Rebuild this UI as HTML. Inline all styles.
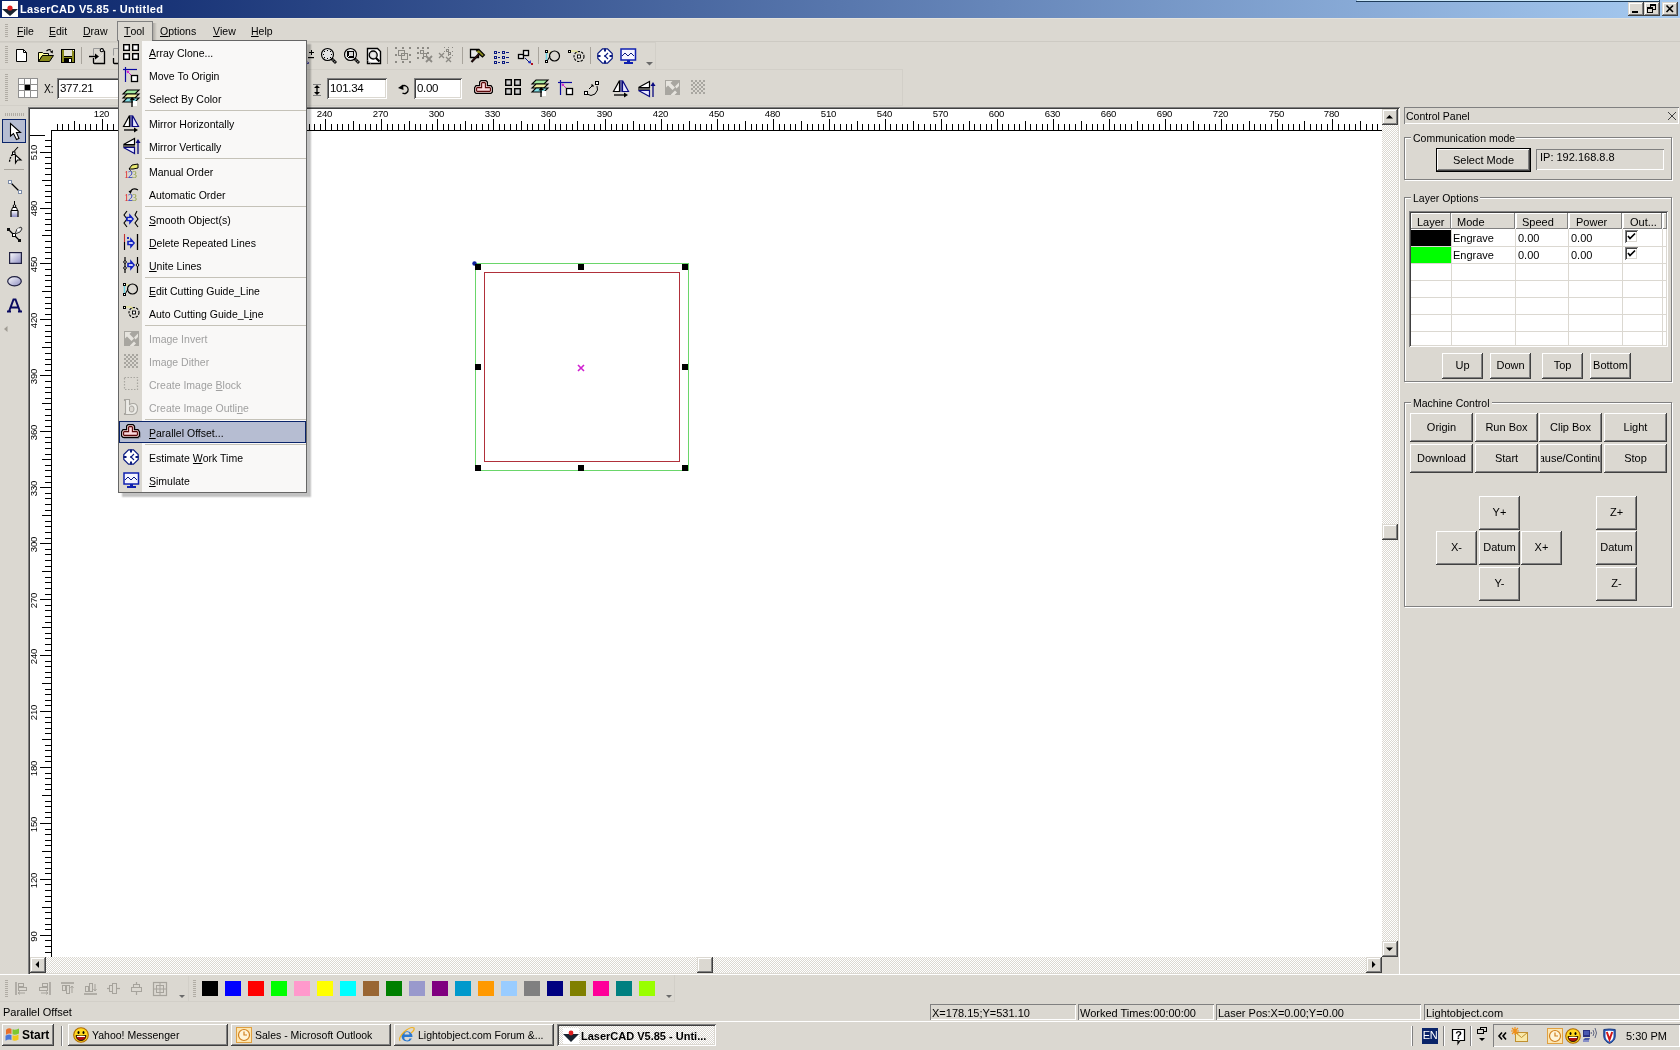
<!DOCTYPE html><html><head><meta charset="utf-8"><style>
*{margin:0;padding:0;box-sizing:border-box}
html,body{width:1680px;height:1050px;overflow:hidden;background:#dbd8d1;font-family:"Liberation Sans",sans-serif;font-size:11px;color:#000}
body>div,#root div{position:absolute}
#root{position:absolute;left:0;top:0;width:1680px;height:1050px;overflow:hidden;will-change:transform}
.t{white-space:nowrap;line-height:13px;height:13px}
svg{position:absolute;overflow:visible}
u{text-decoration:none;border-bottom:1px solid currentColor;display:inline-block;line-height:10px}
.rl{font-size:9.6px;line-height:9px;height:9px;text-align:center;letter-spacing:-0.2px}
.chk{background-image:repeating-conic-gradient(#fff 0 25%,#dbd8d1 0 50%);background-size:2px 2px}
</style></head><body><div id="root">

<div style="left:0px;top:0px;width:1680px;height:18px;background:linear-gradient(to right,#0a246a,#a6caf0);"></div>
<div style="left:1357px;top:0px;width:302px;height:1px;background:#c8e4f6;"></div>
<div style="left:1356px;top:1px;width:304px;height:1px;background:#1e3c5a;"></div>
<div style="left:1659px;top:0px;width:1px;height:1px;background:#1e3c5a;"></div>
<svg style="left:2px;top:1px" width="16" height="16" viewBox="0 0 16 16"><rect x="0" y="0" width="16" height="16" fill="#fff"/><path d="M0 8 L16 8 L8 15 Z" fill="#1a2430"/><circle cx="8" cy="7" r="2.6" fill="#e02020"/></svg>
<div class="t" style="left:20px;top:3px;color:#fff;font-weight:bold;font-size:11px;letter-spacing:0.3px;">LaserCAD V5.85 - Untitled</div>
<div style="left:1628px;top:2px;width:16px;height:14px;box-shadow:inset -1px -1px #404040,inset 1px 1px #dbd8d1,inset -2px -2px #808080,inset 2px 2px #fff;background:#dbd8d1;"><div style="left:4px;top:9px;width:6px;height:2px;background:#000"></div></div>
<div style="left:1644px;top:2px;width:16px;height:14px;box-shadow:inset -1px -1px #404040,inset 1px 1px #dbd8d1,inset -2px -2px #808080,inset 2px 2px #fff;background:#dbd8d1;"><div style="left:6px;top:2px;width:6px;height:6px;border:1px solid #000;border-top-width:2px"></div><div style="left:3px;top:5px;width:6px;height:6px;border:1px solid #000;border-top-width:2px;background:#dbd8d1"></div></div>
<div style="left:1662px;top:2px;width:16px;height:14px;box-shadow:inset -1px -1px #404040,inset 1px 1px #dbd8d1,inset -2px -2px #808080,inset 2px 2px #fff;background:#dbd8d1;"><svg style="left:0;top:0" width="16" height="14"><path d="M4.5 3.5 L11 10 M11 3.5 L4.5 10" stroke="#000" stroke-width="1.6"/></svg></div>
<div style="left:5px;top:24px;width:3px;height:14px;background:repeating-linear-gradient(#b0aca4 0 1px,transparent 1px 2px);"></div>
<div style="left:117px;top:21px;width:36px;height:21px;border:1px solid #808080;border-bottom:none;background:#dbd8d1;"></div>
<div class="t" style="left:17px;top:25px;transform:scaleX(.955);transform-origin:0 0;"><u>F</u>ile</div>
<div class="t" style="left:49px;top:25px;transform:scaleX(.955);transform-origin:0 0;"><u>E</u>dit</div>
<div class="t" style="left:83px;top:25px;transform:scaleX(.955);transform-origin:0 0;"><u>D</u>raw</div>
<div class="t" style="left:124px;top:25px;transform:scaleX(.955);transform-origin:0 0;"><u>T</u>ool</div>
<div class="t" style="left:160px;top:25px;transform:scaleX(.955);transform-origin:0 0;"><u>O</u>ptions</div>
<div class="t" style="left:213px;top:25px;transform:scaleX(.955);transform-origin:0 0;"><u>V</u>iew</div>
<div class="t" style="left:251px;top:25px;transform:scaleX(.955);transform-origin:0 0;"><u>H</u>elp</div>
<div style="left:0px;top:41px;width:1680px;height:1px;background:#cdcac3;"></div>
<div style="left:0px;top:18px;width:1680px;height:1px;background:#e4e2dc;"></div>
<div style="left:0px;top:42px;width:656px;height:28px;border:1px solid #d2cfc8;border-left:none;"></div>
<div style="left:0px;top:69px;width:903px;height:37px;border:1px solid #d2cfc8;border-left:none;"></div>
<div style="left:5px;top:46px;width:3px;height:18px;background:repeating-linear-gradient(#b0aca4 0 1px,transparent 1px 2px);"></div>
<div style="left:5px;top:74px;width:3px;height:28px;background:repeating-linear-gradient(#b0aca4 0 1px,transparent 1px 2px);"></div>
<svg style="left:16px;top:49px;" width="12" height="14" viewBox="0 0 12 14"><path d="M.5 .5H7.5L10.5 3.5V12.5H.5Z" fill="#fff" stroke="#000"/><path d="M7.5 .5V3.5H10.5" fill="none" stroke="#000"/></svg>
<svg style="left:38px;top:49px;" width="16" height="14" viewBox="0 0 16 14"><path d="M8.5 2.2Q10.5 -.2 13 1.2" fill="none" stroke="#000" stroke-width="1.2"/><path d="M11.8 2.8L15 1.2L14.6 4.6Z" fill="#000"/><path d="M.5 3.5H4.5L5.5 4.5H10.5V6.5H4.5L.5 12.5Z" fill="#ffff9c" stroke="#000"/><path d="M4.5 6.5H15.5L11.5 12.5H.5Z" fill="#8a8a1c" stroke="#000"/></svg>
<svg style="left:61px;top:49px;" width="15" height="15" viewBox="0 0 15 15"><rect x="0" y="0" width="14" height="14" fill="#000"/><rect x="1" y="1" width="12" height="12" fill="#8a8a1c"/><rect x="3" y="1" width="8" height="6" fill="#e4e2d8"/><rect x="3" y="7" width="8" height="1" fill="#000"/><rect x="3" y="9" width="8" height="5" fill="#000"/><rect x="8" y="10" width="2" height="3" fill="#fff"/><rect x="12" y="1" width="1" height="1" fill="#fff"/></svg>
<div style="left:81px;top:47px;width:1px;height:17px;background:#a8a49c;"></div>
<svg style="left:89px;top:48px;" width="17" height="16" viewBox="0 0 17 16"><path d="M4.5 7.5V.5H11.5" fill="none" stroke="#9a9a9a"/><path d="M4.5 10V14.5Q4.5 15.5 5.5 15.5H15.5V3.5L12.5 .5" fill="none" stroke="#000" stroke-width="1.3"/><circle cx="12.8" cy="2.2" r="1.6" fill="#fff" stroke="#000" stroke-width="1.1"/><path d="M0 8.5H8" stroke="#000" stroke-width="1.4"/><path d="M6 5.5L10 8.5L6 11.5Z" fill="#000"/><path d="M6 14L14 6" stroke="#e8e8e8"/></svg>
<svg style="left:109px;top:48px;" width="17" height="16" viewBox="0 0 17 16"><path d="M4.5 7.5V.5H11.5" fill="none" stroke="#9a9a9a"/><path d="M4.5 10V14.5Q4.5 15.5 5.5 15.5H15.5" fill="none" stroke="#000" stroke-width="1.3"/></svg>
<svg style="left:303px;top:49px;" width="12" height="16" viewBox="0 0 12 16"><rect x="6" y="3" width="5" height="1" fill="#000"/><rect x="8" y="1" width="1" height="5" fill="#000"/><rect x="5" y="8" width="6" height="1.2" fill="#000"/><path d="M1.5 10.5L6 15" stroke="#10108a" stroke-width="1.8" stroke-dasharray="1.3 .9"/></svg>
<svg style="left:321px;top:48px;" width="16" height="17" viewBox="0 0 16 17"><circle cx="6.5" cy="6.5" r="6" fill="#e4e4e4" stroke="#000" stroke-width="1.1"/><g fill="#000"><rect x="3" y="3" width="1" height="1"/><rect x="6" y="2" width="1" height="1"/><rect x="9" y="3" width="1" height="1"/><rect x="2" y="6" width="1" height="1"/><rect x="10" y="6" width="1" height="1"/><rect x="3" y="9" width="1" height="1"/><rect x="6" y="10" width="1" height="1"/><rect x="9" y="9" width="1" height="1"/></g><path d="M10.5 10.5L15 15" stroke="#000" stroke-width="2.8"/><rect x="11.5" y="11.5" width="1" height="1" fill="#fff"/><rect x="13.3" y="13.3" width="1" height="1" fill="#fff"/></svg>
<svg style="left:344px;top:48px;" width="16" height="17" viewBox="0 0 16 17"><circle cx="6.5" cy="6.5" r="6" fill="#e4e4e4" stroke="#000" stroke-width="1.1"/><rect x="3" y="3" width="7" height="7" fill="#000"/><rect x="5" y="4" width="4" height="4" fill="#d8d8d8"/><path d="M3 10L6 7" stroke="#fff"/><path d="M10.5 10.5L15 15" stroke="#000" stroke-width="2.8"/><rect x="11.5" y="11.5" width="1" height="1" fill="#fff"/><rect x="13.3" y="13.3" width="1" height="1" fill="#fff"/></svg>
<svg style="left:367px;top:48px;" width="14" height="17" viewBox="0 0 14 17"><path d="M.5 .5H10.5L13.5 3.5V15.5H.5Z" fill="#fff" stroke="#000" stroke-width="1.4"/><path d="M.5 12.5L4 15.5" stroke="#999"/><circle cx="6.2" cy="7" r="4" fill="#d8d8d8" stroke="#000" stroke-width="1.3"/><path d="M9 10L12.5 13.5" stroke="#000" stroke-width="2.2"/><circle cx="6.2" cy="7" r="2.2" fill="#eee"/></svg>
<div style="left:387px;top:47px;width:1px;height:17px;background:#a8a49c;"></div>
<svg style="left:394px;top:47px;" width="17" height="17" viewBox="0 0 17 17"><g fill="#8c8a84"><rect x="1" y="0" width="2" height="2"/><rect x="8" y="0" width="2" height="2"/><rect x="15" y="0" width="2" height="2"/><rect x="1" y="7" width="2" height="2"/><rect x="15" y="7" width="2" height="2"/><rect x="1" y="14" width="2" height="2"/><rect x="8" y="14" width="2" height="2"/><rect x="15" y="14" width="2" height="2"/></g><rect x="4.5" y="3.5" width="6" height="5" fill="none" stroke="#8c8a84"/><rect x="7.5" y="6.5" width="6" height="6" fill="none" stroke="#8c8a84"/></svg>
<svg style="left:417px;top:47px;" width="17" height="17" viewBox="0 0 17 17"><g fill="#8c8a84"><rect x="0" y="0" width="2" height="2"/><rect x="5" y="0" width="2" height="2"/><rect x="10" y="0" width="2" height="2"/><rect x="0" y="5" width="2" height="2"/><rect x="10" y="5" width="2" height="2"/><rect x="0" y="10" width="2" height="2"/><rect x="5" y="10" width="2" height="2"/></g><rect x="3.5" y="3.5" width="3" height="3" fill="none" stroke="#8c8a84"/><rect x="6.5" y="6.5" width="3" height="3" fill="none" stroke="#8c8a84"/><path d="M9 9L15 15M15 9L9 15" stroke="#8c8a84" stroke-width="1.8"/></svg>
<svg style="left:439px;top:47px;" width="17" height="17" viewBox="0 0 17 17"><g fill="#8c8a84"><rect x="5" y="0" width="1" height="1"/><rect x="9" y="0" width="1" height="1"/><rect x="13" y="0" width="1" height="1"/><rect x="5" y="4" width="1" height="1"/><rect x="13" y="4" width="1" height="1"/><rect x="9" y="8" width="1" height="1"/><rect x="13" y="8" width="1" height="1"/></g><rect x="7.5" y="2.5" width="2" height="2" fill="none" stroke="#8c8a84"/><rect x="9.5" y="5.5" width="2" height="2" fill="none" stroke="#8c8a84"/><path d="M0 6L5 11M5 6L0 11M7 10L12 15M12 10L7 15" stroke="#8c8a84" stroke-width="1.3"/></svg>
<div style="left:462px;top:47px;width:1px;height:17px;background:#a8a49c;"></div>
<svg style="left:470px;top:49px;" width="16" height="15" viewBox="0 0 16 15"><path d="M.5 .5H8.5V8.5H.5Z" fill="#e8e8e8" stroke="#000" stroke-width="1.3"/><path d="M6 2L9 .5L14.5 6L12.5 8L9 5" fill="#8a8a1c" stroke="#000" stroke-width="1.1"/><path d="M9.5 4.5L1.5 13" stroke="#000" stroke-width="2.2"/><path d="M9 5L2 12.5" stroke="#6a2020" stroke-width=".7"/></svg>
<svg style="left:494px;top:49px;" width="16" height="14" viewBox="0 0 16 14"><rect x=".5" y="2.5" width="2" height="2" fill="none" stroke="#0a1a80"/><path d="M4 3.5H6" stroke="#0a1a80"/><rect x="8.5" y="2.5" width="2" height="2" fill="none" stroke="#0a1a80"/><path d="M12 3.5H15" stroke="#0a1a80"/><rect x=".5" y="7.5" width="2" height="2" fill="none" stroke="#0a1a80"/><path d="M4 8.5H6" stroke="#0a1a80"/><rect x="8.5" y="7.5" width="2" height="2" fill="none" stroke="#0a1a80"/><path d="M12 8.5H15" stroke="#0a1a80"/><rect x=".5" y="12.5" width="2" height="2" fill="none" stroke="#0a1a80"/><path d="M4 13.5H6" stroke="#0a1a80"/><rect x="8.5" y="12.5" width="2" height="2" fill="none" stroke="#0a1a80"/><path d="M12 13.5H15" stroke="#0a1a80"/></svg>
<svg style="left:517px;top:49px;" width="17" height="16" viewBox="0 0 17 16"><rect x="1.5" y="5.5" width="5" height="4" fill="#eee" stroke="#000" stroke-width="1.3"/><rect x="6.5" y="1.5" width="5" height="5" fill="#eee" stroke="#000" stroke-width="1.3"/><path d="M8 9L13 14" stroke="#0a1a80"/><path d="M11 14L14 14.5L13.5 11Z" fill="#1020c0"/><rect x="14" y="14" width="2" height="2" fill="#b01020"/></svg>
<div style="left:538px;top:47px;width:1px;height:17px;background:#a8a49c;"></div>
<svg style="left:545px;top:50px;" width="17" height="15" viewBox="0 0 17 15"><path d="M1.5 3V12" stroke="#6cd4e4" stroke-width="1.5"/><path d="M3 2H6" stroke="#e8e880"/><rect x=".5" y=".5" width="2" height="2" fill="#fff" stroke="#000"/><rect x=".5" y="10.5" width="2" height="2" fill="#fff" stroke="#000"/><path d="M2.5 10.5L5 6" stroke="#000"/><circle cx="9.5" cy="6" r="5" fill="none" stroke="#000" stroke-width="1.2"/></svg>
<svg style="left:568px;top:50px;" width="17" height="15" viewBox="0 0 17 15"><rect x=".5" y=".5" width="2" height="2" fill="#fff" stroke="#000"/><path d="M3 1H8L10 3" stroke="#e8e880" fill="none" stroke-width="1.2"/><circle cx="11" cy="6.5" r="5" fill="none" stroke="#000" stroke-width="1.1" stroke-dasharray="2.4 1.2"/><rect x="9.5" y="5" width="3" height="3" fill="#fff" stroke="#000" stroke-width=".9"/></svg>
<div style="left:590px;top:47px;width:1px;height:17px;background:#a8a49c;"></div>
<svg style="left:597px;top:48px;" width="17" height="17" viewBox="0 0 17 17"><path d="M5.5 .8H10.5L15.2 5.5V10.5L10.5 15.2H5.5L.8 10.5V5.5Z" fill="#fff" stroke="#0a1a80" stroke-width="1.2"/><path d="M8 .5V3.5M8 12.5V15.5M.5 8H3.5M12.5 8H15.5" stroke="#0a1a80" stroke-width="2"/><path d="M11 5L8 8L11 11" fill="none" stroke="#0a1a80" stroke-width="1.1"/><rect x="7.2" y="7.2" width="1.6" height="1.6" fill="#0a1a80"/></svg>
<svg style="left:620px;top:48px;" width="17" height="17" viewBox="0 0 17 17"><rect x="1" y="1" width="14.5" height="11" fill="#f4f4ff" stroke="#1020b0" stroke-width="1.5"/><path d="M2 8L5 5L8 8L11 5L14 8" fill="none" stroke="#0a1a80" stroke-width="1" stroke-linejoin="miter"/><rect x="7" y="12" width="3" height="2" fill="#1020b0"/><rect x="4" y="14" width="9" height="2" fill="#1020b0"/></svg>
<svg style="left:646px;top:62px" width="7" height="4"><path d="M0 0H7L3.5 3.5Z" fill="#6a6a6a"/></svg>
<svg style="left:18px;top:78px;" width="20" height="20" viewBox="0 0 20 20"><rect x=".5" y=".5" width="19" height="19" fill="#fff" stroke="#909090"/><path d="M6.5 0V20M12.5 0V20M0 6.5H20M0 12.5H20" stroke="#909090"/><rect x="7" y="7" width="5" height="5" fill="#000"/></svg>
<div class="t" style="left:44px;top:83px;font-size:12px;transform:scaleX(.85);transform-origin:0 0;">X:</div>
<div style="left:57px;top:78px;width:70px;height:21px;box-shadow:inset 1px 1px #808080,inset -1px -1px #fff,inset 2px 2px #404040,inset -2px -2px #dbd8d1;background:#fff;"></div>
<div class="t" style="left:60px;top:82px;font-size:11.5px;letter-spacing:-.3px;">377.21</div>
<svg style="left:313px;top:84px;" width="8" height="12" viewBox="0 0 8 12"><path d="M0 .5H8M0 11.5H8" stroke="#808080"/><path d="M4 2V10" stroke="#000" stroke-width="1.3"/><path d="M1 4L4 1L7 4ZM1 8L4 11L7 8Z" fill="#000"/></svg>
<div style="left:327px;top:78px;width:60px;height:21px;box-shadow:inset 1px 1px #808080,inset -1px -1px #fff,inset 2px 2px #404040,inset -2px -2px #dbd8d1;background:#fff;"></div>
<div class="t" style="left:330px;top:82px;font-size:11.5px;letter-spacing:-.3px;">101.34</div>
<svg style="left:398px;top:84px;" width="12" height="10" viewBox="0 0 12 10"><path d="M4 2.2A4 4 0 1 1 4.5 9.2" fill="none" stroke="#000" stroke-width="1.3"/><path d="M0 4L5 .5L5.5 6Z" fill="#000"/></svg>
<div style="left:414px;top:78px;width:48px;height:21px;box-shadow:inset 1px 1px #808080,inset -1px -1px #fff,inset 2px 2px #404040,inset -2px -2px #dbd8d1;background:#fff;"></div>
<div class="t" style="left:417px;top:82px;font-size:11.5px;letter-spacing:-.3px;">0.00</div>
<svg style="left:474px;top:80px;" width="20" height="15" viewBox="0 0 20 15"><path d="M7 .6H12L13.4 2V5.6H17L18.4 7.6V12L17 13.4H2L.6 12V7.6L2 5.6H5.6V2Z" fill="#f8d4d4" stroke="#000" stroke-width="1.2"/><path d="M8.2 2.6H10.8L11.4 3.2V7.6H15.8L16.4 8.2V10.8L15.8 11.4H3.2L2.6 10.8V8.2L3.2 7.6H7.6V3.2Z" fill="#fcd8dc" stroke="#5a0808" stroke-width="1.1"/></svg>
<svg style="left:505px;top:79px;" width="16" height="16" viewBox="0 0 16 16"><g fill="#d0d0d0" stroke="#000" stroke-width="1.4"><rect x=".7" y=".7" width="5.6" height="5.6"/><rect x="9.7" y=".7" width="5.6" height="5.6"/><rect x=".7" y="9.7" width="5.6" height="5.6"/><rect x="9.7" y="9.7" width="5.6" height="5.6"/></g></svg>
<svg style="left:532px;top:79px;" width="17" height="18" viewBox="0 0 17 18"><path d="M4 1H16L12 5H0Z" fill="#a0e8a0" stroke="#000" stroke-width="1.1"/><path d="M4 5H16L12 9H0Z" fill="#f0f0a0" stroke="#000" stroke-width="1.1"/><path d="M4 9H16L12 13H0Z" fill="#80e0e8" stroke="#000" stroke-width="1.1"/><path d="M9 9V18" stroke="#000" stroke-width="1.3"/><path d="M6.5 11.5L9 8L12 11" fill="#000"/><rect x="10" y="12" width="4" height="5" fill="#fff"/></svg>
<svg style="left:558px;top:80px;" width="16" height="16" viewBox="0 0 16 16"><path d="M0 2.5H14" stroke="#0a0aa0" stroke-width="1.2"/><path d="M2.5 0V15" stroke="#0a0aa0" stroke-width="1.2"/><path d="M4 4L8 8" stroke="#d020d0"/><path d="M3.5 3.5L6.5 4L4 6.5Z" fill="#d020d0"/><rect x="8.5" y="8.5" width="6" height="6" fill="#fff" stroke="#000" stroke-width="1.3"/></svg>
<svg style="left:584px;top:81px;" width="16" height="16" viewBox="0 0 16 16"><rect x=".5" y="10.5" width="3" height="3" fill="#fff" stroke="#000"/><rect x="11.5" y=".5" width="3" height="3" fill="#fff" stroke="#000"/><path d="M3 13Q7 16 11 13Q15 9 13 5" fill="none" stroke="#000"/><path d="M5 8L9 4M7 4H9V6" fill="none" stroke="#000"/></svg>
<svg style="left:613px;top:80px;" width="16" height="17" viewBox="0 0 16 17"><path d="M6.5 .5V11.5H.5Z" fill="#fff" stroke="#000" stroke-width="1.2"/><path d="M9.5 .5V11.5H15.5Z" fill="#e8e8ff" stroke="#0a0a80" stroke-width="1.2"/><path d="M8 0V12" stroke="#0a0a80" stroke-width="1.2"/><path d="M1 15H13" stroke="#000" stroke-width="1.3"/><path d="M11 12.5L15 15L11 17.5Z" fill="#000"/></svg>
<svg style="left:638px;top:81px;" width="17" height="16" viewBox="0 0 17 16"><path d="M.5 6.5H11.5L11.5 .5Z" fill="#fff" stroke="#000" stroke-width="1.2"/><path d="M.5 9.5H11.5V15.5Z" fill="#e8e8ff" stroke="#0a0a80" stroke-width="1.2"/><path d="M0 8H12" stroke="#000" stroke-width="1.2"/><path d="M15 16V3" stroke="#0a0a80" stroke-width="1.3"/><path d="M12.5 5L15 1L17.5 5Z" fill="#0a0a80"/></svg>
<svg style="left:665px;top:80px;" width="15" height="15" viewBox="0 0 15 15"><rect x="0" y="0" width="15" height="15" fill="#a8a6a0"/><path d="M1 1H7.5L5.5 3L10 7.5L7.5 10L3 5.5L1 7.5Z" fill="#e6e4de"/><path d="M10 6.5L14 2.5V6L11.5 8.5Z" fill="#e6e4de"/><path d="M6 14.5L10 10.5L12 12.5L9.5 15H6Z" fill="#e6e4de"/></svg>
<svg style="left:691px;top:80px;" width="14" height="14" viewBox="0 0 14 14"><path d="M0 0h2v2h-2zM4 0h2v2h-2zM8 0h2v2h-2zM12 0h2v2h-2zM2 2h2v2h-2zM6 2h2v2h-2zM10 2h2v2h-2zM0 4h2v2h-2zM4 4h2v2h-2zM8 4h2v2h-2zM12 4h2v2h-2zM2 6h2v2h-2zM6 6h2v2h-2zM10 6h2v2h-2zM0 8h2v2h-2zM4 8h2v2h-2zM8 8h2v2h-2zM12 8h2v2h-2zM2 10h2v2h-2zM6 10h2v2h-2zM10 10h2v2h-2zM0 12h2v2h-2zM4 12h2v2h-2zM8 12h2v2h-2zM12 12h2v2h-2z" fill="#a8a6a0"/></svg>
<div style="left:28px;top:107px;width:1372px;height:868px;background:#fff;box-shadow:inset 1px 1px #808080,inset -1px -1px #fff,inset 2px 2px #404040,inset -2px -2px #dbd8d1;"></div>
<svg style="left:0;top:0" width="1680" height="1050"><path d="M57.5 124V130M62.5 124V130M68.5 124V130M74.5 121V130M79.5 124V130M85.5 124V130M90.5 124V130M96.5 124V130M102.5 119V130M107.5 124V130M113.5 124V130M118.5 124V130M124.5 124V130M130.5 121V130M135.5 124V130M141.5 124V130M146.5 124V130M152.5 124V130M158.5 119V130M163.5 124V130M169.5 124V130M174.5 124V130M180.5 124V130M185.5 121V130M191.5 124V130M197.5 124V130M202.5 124V130M208.5 124V130M213.5 119V130M219.5 124V130M225.5 124V130M230.5 124V130M236.5 124V130M241.5 121V130M247.5 124V130M253.5 124V130M258.5 124V130M264.5 124V130M269.5 119V130M275.5 124V130M281.5 124V130M286.5 124V130M292.5 124V130M297.5 121V130M303.5 124V130M309.5 124V130M314.5 124V130M320.5 124V130M325.5 119V130M331.5 124V130M337.5 124V130M342.5 124V130M348.5 124V130M353.5 121V130M359.5 124V130M365.5 124V130M370.5 124V130M376.5 124V130M381.5 119V130M387.5 124V130M392.5 124V130M398.5 124V130M404.5 124V130M409.5 121V130M415.5 124V130M420.5 124V130M426.5 124V130M432.5 124V130M437.5 119V130M443.5 124V130M448.5 124V130M454.5 124V130M460.5 124V130M465.5 121V130M471.5 124V130M476.5 124V130M482.5 124V130M488.5 124V130M493.5 119V130M499.5 124V130M504.5 124V130M510.5 124V130M516.5 124V130M521.5 121V130M527.5 124V130M532.5 124V130M538.5 124V130M544.5 124V130M549.5 119V130M555.5 124V130M560.5 124V130M566.5 124V130M572.5 124V130M577.5 121V130M583.5 124V130M588.5 124V130M594.5 124V130M600.5 124V130M605.5 119V130M611.5 124V130M616.5 124V130M622.5 124V130M627.5 124V130M633.5 121V130M639.5 124V130M644.5 124V130M650.5 124V130M655.5 124V130M661.5 119V130M667.5 124V130M672.5 124V130M678.5 124V130M683.5 124V130M689.5 121V130M695.5 124V130M700.5 124V130M706.5 124V130M711.5 124V130M717.5 119V130M723.5 124V130M728.5 124V130M734.5 124V130M739.5 124V130M745.5 121V130M751.5 124V130M756.5 124V130M762.5 124V130M767.5 124V130M773.5 119V130M779.5 124V130M784.5 124V130M790.5 124V130M795.5 124V130M801.5 121V130M807.5 124V130M812.5 124V130M818.5 124V130M823.5 124V130M829.5 119V130M834.5 124V130M840.5 124V130M846.5 124V130M851.5 124V130M857.5 121V130M862.5 124V130M868.5 124V130M874.5 124V130M879.5 124V130M885.5 119V130M890.5 124V130M896.5 124V130M902.5 124V130M907.5 124V130M913.5 121V130M918.5 124V130M924.5 124V130M930.5 124V130M935.5 124V130M941.5 119V130M946.5 124V130M952.5 124V130M958.5 124V130M963.5 124V130M969.5 121V130M974.5 124V130M980.5 124V130M986.5 124V130M991.5 124V130M997.5 119V130M1002.5 124V130M1008.5 124V130M1014.5 124V130M1019.5 124V130M1025.5 121V130M1030.5 124V130M1036.5 124V130M1042.5 124V130M1047.5 124V130M1053.5 119V130M1058.5 124V130M1064.5 124V130M1069.5 124V130M1075.5 124V130M1081.5 121V130M1086.5 124V130M1092.5 124V130M1097.5 124V130M1103.5 124V130M1109.5 119V130M1114.5 124V130M1120.5 124V130M1125.5 124V130M1131.5 124V130M1137.5 121V130M1142.5 124V130M1148.5 124V130M1153.5 124V130M1159.5 124V130M1165.5 119V130M1170.5 124V130M1176.5 124V130M1181.5 124V130M1187.5 124V130M1193.5 121V130M1198.5 124V130M1204.5 124V130M1209.5 124V130M1215.5 124V130M1221.5 119V130M1226.5 124V130M1232.5 124V130M1237.5 124V130M1243.5 124V130M1249.5 121V130M1254.5 124V130M1260.5 124V130M1265.5 124V130M1271.5 124V130M1277.5 119V130M1282.5 124V130M1288.5 124V130M1293.5 124V130M1299.5 124V130M1304.5 121V130M1310.5 124V130M1316.5 124V130M1321.5 124V130M1327.5 124V130M1332.5 119V130M1338.5 124V130M1344.5 124V130M1349.5 124V130M1355.5 124V130M1360.5 121V130M1366.5 124V130M1372.5 124V130M1377.5 124V130M51 130.5H1382" stroke="#000" stroke-width="1" fill="none"/></svg>
<div class="rl" style="left:86.5px;top:109px;width:30px;">120</div>
<div class="rl" style="left:142.5px;top:109px;width:30px;">150</div>
<div class="rl" style="left:197.5px;top:109px;width:30px;">180</div>
<div class="rl" style="left:253.5px;top:109px;width:30px;">210</div>
<div class="rl" style="left:309.5px;top:109px;width:30px;">240</div>
<div class="rl" style="left:365.5px;top:109px;width:30px;">270</div>
<div class="rl" style="left:421.5px;top:109px;width:30px;">300</div>
<div class="rl" style="left:477.5px;top:109px;width:30px;">330</div>
<div class="rl" style="left:533.5px;top:109px;width:30px;">360</div>
<div class="rl" style="left:589.5px;top:109px;width:30px;">390</div>
<div class="rl" style="left:645.5px;top:109px;width:30px;">420</div>
<div class="rl" style="left:701.5px;top:109px;width:30px;">450</div>
<div class="rl" style="left:757.5px;top:109px;width:30px;">480</div>
<div class="rl" style="left:813.5px;top:109px;width:30px;">510</div>
<div class="rl" style="left:869.5px;top:109px;width:30px;">540</div>
<div class="rl" style="left:925.5px;top:109px;width:30px;">570</div>
<div class="rl" style="left:981.5px;top:109px;width:30px;">600</div>
<div class="rl" style="left:1037.5px;top:109px;width:30px;">630</div>
<div class="rl" style="left:1093.5px;top:109px;width:30px;">660</div>
<div class="rl" style="left:1149.5px;top:109px;width:30px;">690</div>
<div class="rl" style="left:1205.5px;top:109px;width:30px;">720</div>
<div class="rl" style="left:1261.5px;top:109px;width:30px;">750</div>
<div class="rl" style="left:1316.5px;top:109px;width:30px;">780</div>
<svg style="left:0;top:0" width="1680" height="1050"><path d="M45 140.5H51M45 146.5H51M40 152.5H51M45 157.5H51M45 163.5H51M45 168.5H51M45 174.5H51M42 180.5H51M45 185.5H51M45 191.5H51M45 196.5H51M45 202.5H51M40 208.5H51M45 213.5H51M45 219.5H51M45 224.5H51M45 230.5H51M42 235.5H51M45 241.5H51M45 247.5H51M45 252.5H51M45 258.5H51M40 263.5H51M45 269.5H51M45 275.5H51M45 280.5H51M45 286.5H51M42 291.5H51M45 297.5H51M45 303.5H51M45 308.5H51M45 314.5H51M40 319.5H51M45 325.5H51M45 331.5H51M45 336.5H51M45 342.5H51M42 347.5H51M45 353.5H51M45 359.5H51M45 364.5H51M45 370.5H51M40 375.5H51M45 381.5H51M45 387.5H51M45 392.5H51M45 398.5H51M42 403.5H51M45 409.5H51M45 415.5H51M45 420.5H51M45 426.5H51M40 431.5H51M45 437.5H51M45 442.5H51M45 448.5H51M45 454.5H51M42 459.5H51M45 465.5H51M45 470.5H51M45 476.5H51M45 482.5H51M40 487.5H51M45 493.5H51M45 498.5H51M45 504.5H51M45 510.5H51M42 515.5H51M45 521.5H51M45 526.5H51M45 532.5H51M45 538.5H51M40 543.5H51M45 549.5H51M45 554.5H51M45 560.5H51M45 566.5H51M42 571.5H51M45 577.5H51M45 582.5H51M45 588.5H51M45 594.5H51M40 599.5H51M45 605.5H51M45 610.5H51M45 616.5H51M45 622.5H51M42 627.5H51M45 633.5H51M45 638.5H51M45 644.5H51M45 650.5H51M40 655.5H51M45 661.5H51M45 666.5H51M45 672.5H51M45 677.5H51M42 683.5H51M45 689.5H51M45 694.5H51M45 700.5H51M45 705.5H51M40 711.5H51M45 717.5H51M45 722.5H51M45 728.5H51M45 733.5H51M42 739.5H51M45 745.5H51M45 750.5H51M45 756.5H51M45 761.5H51M40 767.5H51M45 773.5H51M45 778.5H51M45 784.5H51M45 789.5H51M42 795.5H51M45 801.5H51M45 806.5H51M45 812.5H51M45 817.5H51M40 823.5H51M45 829.5H51M45 834.5H51M45 840.5H51M45 845.5H51M42 851.5H51M45 857.5H51M45 862.5H51M45 868.5H51M45 873.5H51M40 879.5H51M45 884.5H51M45 890.5H51M45 896.5H51M45 901.5H51M42 907.5H51M45 912.5H51M45 918.5H51M45 924.5H51M45 929.5H51M40 935.5H51M45 940.5H51M45 946.5H51M45 952.5H51M51.5 130V957M30 135.5H45" stroke="#000" stroke-width="1" fill="none"/></svg>
<div class="rl" style="left:19.5px;top:148.2px;width:30px;transform:rotate(-90deg);transform-origin:15px 4.5px;left:18.3px;">510</div>
<div class="rl" style="left:19.5px;top:204.2px;width:30px;transform:rotate(-90deg);transform-origin:15px 4.5px;left:18.3px;">480</div>
<div class="rl" style="left:19.5px;top:260.2px;width:30px;transform:rotate(-90deg);transform-origin:15px 4.5px;left:18.3px;">450</div>
<div class="rl" style="left:19.5px;top:316.1px;width:30px;transform:rotate(-90deg);transform-origin:15px 4.5px;left:18.3px;">420</div>
<div class="rl" style="left:19.5px;top:372.1px;width:30px;transform:rotate(-90deg);transform-origin:15px 4.5px;left:18.3px;">390</div>
<div class="rl" style="left:19.5px;top:428.0px;width:30px;transform:rotate(-90deg);transform-origin:15px 4.5px;left:18.3px;">360</div>
<div class="rl" style="left:19.5px;top:483.9px;width:30px;transform:rotate(-90deg);transform-origin:15px 4.5px;left:18.3px;">330</div>
<div class="rl" style="left:19.5px;top:539.9px;width:30px;transform:rotate(-90deg);transform-origin:15px 4.5px;left:18.3px;">300</div>
<div class="rl" style="left:19.5px;top:595.9px;width:30px;transform:rotate(-90deg);transform-origin:15px 4.5px;left:18.3px;">270</div>
<div class="rl" style="left:19.5px;top:651.8px;width:30px;transform:rotate(-90deg);transform-origin:15px 4.5px;left:18.3px;">240</div>
<div class="rl" style="left:19.5px;top:707.8px;width:30px;transform:rotate(-90deg);transform-origin:15px 4.5px;left:18.3px;">210</div>
<div class="rl" style="left:19.5px;top:763.7px;width:30px;transform:rotate(-90deg);transform-origin:15px 4.5px;left:18.3px;">180</div>
<div class="rl" style="left:19.5px;top:819.7px;width:30px;transform:rotate(-90deg);transform-origin:15px 4.5px;left:18.3px;">150</div>
<div class="rl" style="left:19.5px;top:875.6px;width:30px;transform:rotate(-90deg);transform-origin:15px 4.5px;left:18.3px;">120</div>
<div class="rl" style="left:19.5px;top:931.5px;width:30px;transform:rotate(-90deg);transform-origin:15px 4.5px;left:18.3px;">90</div>
<div style="left:1382px;top:109px;width:16px;height:848px;"><div class="chk" style="left:0;top:0;width:16px;height:848px"></div></div>
<div style="left:1382px;top:109px;width:16px;height:16px;box-shadow:inset -1px -1px #404040,inset 1px 1px #dbd8d1,inset -2px -2px #808080,inset 2px 2px #fff;background:#dbd8d1;"><svg style="left:0;top:0" width="16" height="16"><path d="M4 9.5H11L7.5 6Z" fill="#000"/></svg></div>
<div style="left:1382px;top:941px;width:16px;height:16px;box-shadow:inset -1px -1px #404040,inset 1px 1px #dbd8d1,inset -2px -2px #808080,inset 2px 2px #fff;background:#dbd8d1;"><svg style="left:0;top:0" width="16" height="16"><path d="M4 6.5H11L7.5 10Z" fill="#000"/></svg></div>
<div style="left:1382px;top:524px;width:16px;height:16px;box-shadow:inset -1px -1px #404040,inset 1px 1px #dbd8d1,inset -2px -2px #808080,inset 2px 2px #fff;background:#dbd8d1;"></div>
<div style="left:30px;top:957px;width:1352px;height:16px;"><div class="chk" style="left:0;top:0;width:1352px;height:16px"></div></div>
<div style="left:30px;top:957px;width:16px;height:16px;box-shadow:inset -1px -1px #404040,inset 1px 1px #dbd8d1,inset -2px -2px #808080,inset 2px 2px #fff;background:#dbd8d1;"><svg style="left:0;top:0" width="16" height="16"><path d="M9 4L5.5 7.5L9 11Z" fill="#000"/></svg></div>
<div style="left:1366px;top:957px;width:16px;height:16px;box-shadow:inset -1px -1px #404040,inset 1px 1px #dbd8d1,inset -2px -2px #808080,inset 2px 2px #fff;background:#dbd8d1;"><svg style="left:0;top:0" width="16" height="16"><path d="M6 4L9.5 7.5L6 11Z" fill="#000"/></svg></div>
<div style="left:697px;top:957px;width:16px;height:16px;box-shadow:inset -1px -1px #404040,inset 1px 1px #dbd8d1,inset -2px -2px #808080,inset 2px 2px #fff;background:#dbd8d1;"></div>
<div style="left:1382px;top:957px;width:16px;height:16px;background:#dbd8d1;"></div>
<svg style="left:0;top:0" width="1680" height="1050"><rect x="475.5" y="263.5" width="213" height="207" fill="none" stroke="#6ad66a" stroke-width="1"/><rect x="484.5" y="272.5" width="195" height="189" fill="none" stroke="#b0303a" stroke-width="1"/><path d="M578 365L584 371M584 365L578 371" stroke="#d020d0" stroke-width="1.6"/><circle cx="474.5" cy="263.5" r="2.2" fill="#1020a0"/></svg>
<div style="left:475px;top:264px;width:6px;height:6px;background:#000;"></div>
<div style="left:475px;top:364px;width:6px;height:6px;background:#000;"></div>
<div style="left:475px;top:465px;width:6px;height:6px;background:#000;"></div>
<div style="left:578px;top:264px;width:6px;height:6px;background:#000;"></div>
<div style="left:578px;top:465px;width:6px;height:6px;background:#000;"></div>
<div style="left:682px;top:264px;width:6px;height:6px;background:#000;"></div>
<div style="left:682px;top:364px;width:6px;height:6px;background:#000;"></div>
<div style="left:682px;top:465px;width:6px;height:6px;background:#000;"></div>
<div style="left:5px;top:113px;width:19px;height:3px;background:repeating-linear-gradient(to right,#b0aca4 0 1px,transparent 1px 2px);"></div>
<div style="left:2px;top:119px;width:24px;height:24px;background:#b6bdd2;border:1px solid #0a246a;"></div>
<svg style="left:9px;top:123px;" width="12" height="18" viewBox="0 0 12 18"><path d="M1.5 .5V13L4.5 10.5L7.5 16.5L10 15.5L7.5 9.5H11.5Z" fill="#fff" stroke="#000" stroke-width="1.1" stroke-linejoin="miter"/></svg>
<svg style="left:8px;top:147px;" width="14" height="17" viewBox="0 0 14 17"><path d="M10 0L5.5 5" stroke="#000" stroke-width="1.1"/><rect x="4.5" y="5" width="2.5" height="2.5" fill="#fff" stroke="#000"/><path d="M4.5 7.5Q2 10 1.5 15" fill="none" stroke="#000" stroke-width="1.3" stroke-dasharray="2 1"/><path d="M7.5 8V16L9.5 13L13 13Z" fill="#fff" stroke="#000" stroke-width="1.1"/></svg>
<div style="left:4px;top:169px;width:20px;height:1px;background:#a8a49c;"></div>
<svg style="left:8px;top:180px;" width="14" height="14" viewBox="0 0 14 14"><path d="M2 2L12 12" stroke="#000" stroke-width="1.2"/><rect x=".5" y=".5" width="3" height="3" fill="#fff" stroke="#7c8ca8"/><rect x="10.5" y="10.5" width="3" height="3" fill="#fff" stroke="#7c8ca8"/></svg>
<svg style="left:10px;top:201px;" width="9" height="17" viewBox="0 0 9 17"><path d="M4.5 0V4" stroke="#000"/><circle cx="4.5" cy="5" r="1.3" fill="#fff" stroke="#000"/><path d="M2.5 6.5H6.5L7.5 9.5H1.5Z" fill="#fff" stroke="#000"/><defs><linearGradient id="pg" x1="0" y1="0" x2="0" y2="1"><stop offset="0" stop-color="#fff"/><stop offset="1" stop-color="#8e8ec4"/></linearGradient></defs><path d="M1 9.5H8V16H1Z" fill="url(#pg)"/><path d="M1 9.5V16M8 9.5V16M1 9.5H8" stroke="#000" stroke-width="1.2"/></svg>
<svg style="left:7px;top:226px;" width="16" height="16" viewBox="0 0 16 16"><path d="M2 4L7 9L12 14" stroke="#000" stroke-width="1.2"/><rect x="0" y="2" width="3" height="3" fill="#111"/><rect x="11" y="13" width="3" height="3" fill="#111"/><rect x="5.5" y="7.5" width="3" height="3" fill="#fff" stroke="#000"/><path d="M8 8L10 3L14 1L15 3L13 6Z" fill="#ddd" stroke="#333"/><circle cx="11.5" cy="3.5" r="1.3" fill="#fff"/></svg>
<svg style="left:9px;top:252px;" width="13" height="12" viewBox="0 0 13 12"><defs><linearGradient id="rg" x1="0" y1="0" x2="1" y2="1"><stop offset="0" stop-color="#fff"/><stop offset="1" stop-color="#8c8cc0"/></linearGradient></defs><rect x=".6" y=".6" width="11.8" height="10.8" fill="url(#rg)" stroke="#202040" stroke-width="1.2"/></svg>
<svg style="left:7px;top:276px;" width="15" height="11" viewBox="0 0 15 11"><defs><linearGradient id="eg" x1="0" y1="0" x2="1" y2="1"><stop offset="0" stop-color="#fff"/><stop offset="1" stop-color="#8c8cc0"/></linearGradient></defs><ellipse cx="7.5" cy="5.2" rx="6.8" ry="4.6" fill="url(#eg)" stroke="#202040" stroke-width="1.2"/></svg>
<svg style="left:7px;top:299px;" width="15" height="13" viewBox="0 0 15 13"><path d="M0 12.5H4M11 12.5H15M2 12.5L6.5 .5H8.5L13 12.5M4.2 8.5H10.8" fill="none" stroke="#0a0a60" stroke-width="2"/></svg>
<svg style="left:4px;top:326px" width="4" height="6"><path d="M3.5 0V6L0 3Z" fill="#a09c94"/></svg>
<div style="left:1404px;top:107px;width:275px;height:17px;box-shadow:inset 1px 1px #808080,inset -1px -1px #fff;"></div>
<div class="t" style="left:1406px;top:110px;transform:scaleX(.955);transform-origin:0 0;">Control Panel</div>
<svg style="left:1667px;top:111px" width="10" height="10"><path d="M1 1L9 9M9 1L1 9" stroke="#404040" stroke-width="1"/></svg>
<div style="left:1404px;top:137px;width:268px;height:43px;border:1px solid #808080;box-shadow:inset 1px 1px #fff,1px 1px #fff;"></div><div style="left:1411px;top:131px;width:105px;height:13px;background:#dbd8d1;"></div><div class="t" style="left:1413px;top:132px;transform:scaleX(.955);transform-origin:0 0;">Communication mode</div>
<div style="left:1436px;top:148px;width:95px;height:24px;box-shadow:inset -1px -1px #404040,inset 1px 1px #fff,inset -2px -2px #808080,inset 2px 2px #dbd8d1;background:#dbd8d1;border:1px solid #000;"></div>
<div class="t" style="left:1436px;top:154px;width:95px;text-align:center;">Select Mode</div>
<div style="left:1536px;top:149px;width:128px;height:21px;box-shadow:inset 1px 1px #808080,inset -1px -1px #fff;"></div>
<div class="t" style="left:1540px;top:151px;">IP: 192.168.8.8</div>
<div style="left:1404px;top:197px;width:268px;height:185px;border:1px solid #808080;box-shadow:inset 1px 1px #fff,1px 1px #fff;"></div><div style="left:1411px;top:191px;width:69px;height:13px;background:#dbd8d1;"></div><div class="t" style="left:1413px;top:192px;transform:scaleX(.955);transform-origin:0 0;">Layer Options</div>
<div style="left:1409px;top:211px;width:259px;height:136px;background:#fff;box-shadow:inset 1px 1px #808080,inset -1px -1px #fff,inset 2px 2px #404040,inset -2px -2px #dbd8d1;"></div>
<div style="left:1411px;top:213px;width:40px;height:16px;box-shadow:inset -1px -1px #808080,inset 1px 1px #fff;background:#dbd8d1;"></div>
<div class="t" style="left:1417px;top:216px;">Layer</div>
<div style="left:1451px;top:213px;width:64px;height:16px;box-shadow:inset -1px -1px #808080,inset 1px 1px #fff;background:#dbd8d1;"></div>
<div class="t" style="left:1457px;top:216px;">Mode</div>
<div style="left:1516px;top:213px;width:52px;height:16px;box-shadow:inset -1px -1px #808080,inset 1px 1px #fff;background:#dbd8d1;"></div>
<div class="t" style="left:1522px;top:216px;">Speed</div>
<div style="left:1569px;top:213px;width:53px;height:16px;box-shadow:inset -1px -1px #808080,inset 1px 1px #fff;background:#dbd8d1;"></div>
<div class="t" style="left:1576px;top:216px;">Power</div>
<div style="left:1623px;top:213px;width:39px;height:16px;box-shadow:inset -1px -1px #808080,inset 1px 1px #fff;background:#dbd8d1;"></div>
<div class="t" style="left:1630px;top:216px;">Out...</div>
<div style="left:1663px;top:213px;width:4px;height:16px;box-shadow:inset -1px -1px #808080,inset 1px 1px #fff;background:#dbd8d1;"></div>
<svg style="left:0;top:0" width="1680" height="1050"><path d="M1451.5 229V346M1515.5 229V346M1568.5 229V346M1622.5 229V346M1662.5 229V346M1411 246.5H1666M1411 263.5H1666M1411 280.5H1666M1411 297.5H1666M1411 314.5H1666M1411 331.5H1666" stroke="#dbd8d1" stroke-width="1"/></svg>
<div style="left:1411px;top:230px;width:40px;height:16px;background:#000;"></div>
<div style="left:1411px;top:247px;width:40px;height:16px;background:#00ff00;"></div>
<div class="t" style="left:1453px;top:232px;">Engrave</div>
<div class="t" style="left:1518px;top:232px;">0.00</div>
<div class="t" style="left:1571px;top:232px;">0.00</div>
<div style="left:1625px;top:230px;width:13px;height:13px;background:#fff;box-shadow:inset 1px 1px #808080,inset -1px -1px #fff,inset 2px 2px #404040,inset -2px -2px #dbd8d1;"><svg style="left:0;top:0" width="13" height="13"><path d="M3 6L5 8.5L10 3.5" stroke="#000" stroke-width="1.7" fill="none"/></svg></div>
<div class="t" style="left:1453px;top:249px;">Engrave</div>
<div class="t" style="left:1518px;top:249px;">0.00</div>
<div class="t" style="left:1571px;top:249px;">0.00</div>
<div style="left:1625px;top:247px;width:13px;height:13px;background:#fff;box-shadow:inset 1px 1px #808080,inset -1px -1px #fff,inset 2px 2px #404040,inset -2px -2px #dbd8d1;"><svg style="left:0;top:0" width="13" height="13"><path d="M3 6L5 8.5L10 3.5" stroke="#000" stroke-width="1.7" fill="none"/></svg></div>
<div style="left:1442px;top:353px;width:41px;height:26px;box-shadow:inset -1px -1px #404040,inset 1px 1px #fff,inset -2px -2px #808080,inset 2px 2px #dbd8d1;background:#dbd8d1;"></div>
<div class="t" style="left:1442px;top:359px;width:41px;text-align:center;">Up</div>
<div style="left:1490px;top:353px;width:41px;height:26px;box-shadow:inset -1px -1px #404040,inset 1px 1px #fff,inset -2px -2px #808080,inset 2px 2px #dbd8d1;background:#dbd8d1;"></div>
<div class="t" style="left:1490px;top:359px;width:41px;text-align:center;">Down</div>
<div style="left:1542px;top:353px;width:41px;height:26px;box-shadow:inset -1px -1px #404040,inset 1px 1px #fff,inset -2px -2px #808080,inset 2px 2px #dbd8d1;background:#dbd8d1;"></div>
<div class="t" style="left:1542px;top:359px;width:41px;text-align:center;">Top</div>
<div style="left:1590px;top:353px;width:41px;height:26px;box-shadow:inset -1px -1px #404040,inset 1px 1px #fff,inset -2px -2px #808080,inset 2px 2px #dbd8d1;background:#dbd8d1;"></div>
<div class="t" style="left:1590px;top:359px;width:41px;text-align:center;">Bottom</div>
<div style="left:1404px;top:402px;width:268px;height:205px;border:1px solid #808080;box-shadow:inset 1px 1px #fff,1px 1px #fff;"></div><div style="left:1411px;top:396px;width:81px;height:13px;background:#dbd8d1;"></div><div class="t" style="left:1413px;top:397px;transform:scaleX(.955);transform-origin:0 0;">Machine Control</div>
<div style="left:1410px;top:413px;width:63px;height:29px;box-shadow:inset -1px -1px #404040,inset 1px 1px #fff,inset -2px -2px #808080,inset 2px 2px #dbd8d1;background:#dbd8d1;"><div class="t" style="left:0;top:8px;width:63px;text-align:center;overflow:hidden">Origin</div></div>
<div style="left:1475px;top:413px;width:63px;height:29px;box-shadow:inset -1px -1px #404040,inset 1px 1px #fff,inset -2px -2px #808080,inset 2px 2px #dbd8d1;background:#dbd8d1;"><div class="t" style="left:0;top:8px;width:63px;text-align:center;overflow:hidden">Run Box</div></div>
<div style="left:1539px;top:413px;width:63px;height:29px;box-shadow:inset -1px -1px #404040,inset 1px 1px #fff,inset -2px -2px #808080,inset 2px 2px #dbd8d1;background:#dbd8d1;"><div class="t" style="left:0;top:8px;width:63px;text-align:center;overflow:hidden">Clip Box</div></div>
<div style="left:1604px;top:413px;width:63px;height:29px;box-shadow:inset -1px -1px #404040,inset 1px 1px #fff,inset -2px -2px #808080,inset 2px 2px #dbd8d1;background:#dbd8d1;"><div class="t" style="left:0;top:8px;width:63px;text-align:center;overflow:hidden">Light</div></div>
<div style="left:1410px;top:444px;width:63px;height:29px;box-shadow:inset -1px -1px #404040,inset 1px 1px #fff,inset -2px -2px #808080,inset 2px 2px #dbd8d1;background:#dbd8d1;"><div class="t" style="left:0;top:8px;width:63px;text-align:center;overflow:hidden">Download</div></div>
<div style="left:1475px;top:444px;width:63px;height:29px;box-shadow:inset -1px -1px #404040,inset 1px 1px #fff,inset -2px -2px #808080,inset 2px 2px #dbd8d1;background:#dbd8d1;"><div class="t" style="left:0;top:8px;width:63px;text-align:center;overflow:hidden">Start</div></div>
<div style="left:1539px;top:444px;width:63px;height:29px;box-shadow:inset -1px -1px #404040,inset 1px 1px #fff,inset -2px -2px #808080,inset 2px 2px #dbd8d1;background:#dbd8d1;"><div style="left:2px;top:0;width:59px;height:29px;overflow:hidden"><div class="t" style="left:-12px;top:8px;width:83px;text-align:center">Pause/Continue</div></div></div>
<div style="left:1604px;top:444px;width:63px;height:29px;box-shadow:inset -1px -1px #404040,inset 1px 1px #fff,inset -2px -2px #808080,inset 2px 2px #dbd8d1;background:#dbd8d1;"><div class="t" style="left:0;top:8px;width:63px;text-align:center;overflow:hidden">Stop</div></div>
<div style="left:1479px;top:496px;width:41px;height:34px;box-shadow:inset -1px -1px #404040,inset 1px 1px #fff,inset -2px -2px #808080,inset 2px 2px #dbd8d1;background:#dbd8d1;"><div class="t" style="left:0;top:10px;width:41px;text-align:center">Y+</div></div>
<div style="left:1436px;top:531px;width:41px;height:34px;box-shadow:inset -1px -1px #404040,inset 1px 1px #fff,inset -2px -2px #808080,inset 2px 2px #dbd8d1;background:#dbd8d1;"><div class="t" style="left:0;top:10px;width:41px;text-align:center">X-</div></div>
<div style="left:1479px;top:531px;width:41px;height:34px;box-shadow:inset -1px -1px #404040,inset 1px 1px #fff,inset -2px -2px #808080,inset 2px 2px #dbd8d1;background:#dbd8d1;"><div class="t" style="left:0;top:10px;width:41px;text-align:center">Datum</div></div>
<div style="left:1521px;top:531px;width:41px;height:34px;box-shadow:inset -1px -1px #404040,inset 1px 1px #fff,inset -2px -2px #808080,inset 2px 2px #dbd8d1;background:#dbd8d1;"><div class="t" style="left:0;top:10px;width:41px;text-align:center">X+</div></div>
<div style="left:1479px;top:567px;width:41px;height:34px;box-shadow:inset -1px -1px #404040,inset 1px 1px #fff,inset -2px -2px #808080,inset 2px 2px #dbd8d1;background:#dbd8d1;"><div class="t" style="left:0;top:10px;width:41px;text-align:center">Y-</div></div>
<div style="left:1596px;top:496px;width:41px;height:34px;box-shadow:inset -1px -1px #404040,inset 1px 1px #fff,inset -2px -2px #808080,inset 2px 2px #dbd8d1;background:#dbd8d1;"><div class="t" style="left:0;top:10px;width:41px;text-align:center">Z+</div></div>
<div style="left:1596px;top:531px;width:41px;height:34px;box-shadow:inset -1px -1px #404040,inset 1px 1px #fff,inset -2px -2px #808080,inset 2px 2px #dbd8d1;background:#dbd8d1;"><div class="t" style="left:0;top:10px;width:41px;text-align:center">Datum</div></div>
<div style="left:1596px;top:567px;width:41px;height:34px;box-shadow:inset -1px -1px #404040,inset 1px 1px #fff,inset -2px -2px #808080,inset 2px 2px #dbd8d1;background:#dbd8d1;"><div class="t" style="left:0;top:10px;width:41px;text-align:center">Z-</div></div>
<div style="left:0px;top:974px;width:1680px;height:1px;background:#fff;"></div>
<div style="left:5px;top:980px;width:3px;height:18px;background:repeating-linear-gradient(#b0aca4 0 1px,transparent 1px 2px);"></div>
<svg style="left:15px;top:982px;" width="13" height="13" viewBox="0 0 13 13"><path d="M1 0V13" stroke="#a6a39c" stroke-width="1.6"/><rect x="3.5" y="1.5" width="5" height="3" fill="none" stroke="#a6a39c"/><rect x="3.5" y="5.5" width="8" height="3" fill="none" stroke="#a6a39c"/><path d="M3 11H10M3 11L5 9.5M3 11L5 12.5" stroke="#a6a39c"/></svg>
<svg style="left:38px;top:982px;" width="13" height="13" viewBox="0 0 13 13"><path d="M12 0V13" stroke="#a6a39c" stroke-width="1.6"/><rect x="4.5" y="1.5" width="5" height="3" fill="none" stroke="#a6a39c"/><rect x="1.5" y="5.5" width="8" height="3" fill="none" stroke="#a6a39c"/><path d="M3 11H10M10 11L8 9.5M10 11L8 12.5" stroke="#a6a39c"/></svg>
<svg style="left:61px;top:982px;" width="13" height="13" viewBox="0 0 13 13"><path d="M0 1H13" stroke="#a6a39c" stroke-width="1.6"/><rect x="1.5" y="3.5" width="3" height="5" fill="none" stroke="#a6a39c"/><rect x="5.5" y="3.5" width="3" height="8" fill="none" stroke="#a6a39c"/><path d="M11 4V11M11 4L9.5 6M11 4L12.5 6" stroke="#a6a39c"/></svg>
<svg style="left:84px;top:982px;" width="13" height="13" viewBox="0 0 13 13"><path d="M0 12H13" stroke="#a6a39c" stroke-width="1.6"/><rect x="1.5" y="4.5" width="3" height="5" fill="none" stroke="#a6a39c"/><rect x="5.5" y="1.5" width="3" height="8" fill="none" stroke="#a6a39c"/><path d="M11 2V9M11 9L9.5 7M11 9L12.5 7" stroke="#a6a39c"/></svg>
<svg style="left:107px;top:982px;" width="13" height="13" viewBox="0 0 13 13"><path d="M0 6.5H13" stroke="#a6a39c" stroke-width="1.2"/><rect x="2.5" y="3.5" width="3" height="6" fill="#dbd8d1" stroke="#a6a39c"/><rect x="5.5" y="1.5" width="4" height="10" fill="#dbd8d1" stroke="#a6a39c"/></svg>
<svg style="left:130px;top:982px;" width="13" height="13" viewBox="0 0 13 13"><path d="M6.5 0V13" stroke="#a6a39c" stroke-width="1.2"/><rect x="3.5" y="2.5" width="6" height="3" fill="#dbd8d1" stroke="#a6a39c"/><rect x="1.5" y="5.5" width="10" height="4" fill="#dbd8d1" stroke="#a6a39c"/></svg>
<svg style="left:153px;top:982px;" width="14" height="14" viewBox="0 0 14 14"><rect x=".5" y=".5" width="13" height="13" fill="none" stroke="#a6a39c" stroke-width="1.2"/><path d="M7 0V14M0 7H14" stroke="#a6a39c"/><rect x="3.5" y="3.5" width="7" height="7" fill="none" stroke="#a6a39c"/></svg>
<svg style="left:179px;top:995px" width="6" height="4"><path d="M0 0H6L3 3Z" fill="#6a6a6a"/></svg>
<div style="left:188px;top:976px;width:1px;height:25px;background:#d2cfc8;"></div>
<div style="left:193px;top:980px;width:3px;height:18px;background:repeating-linear-gradient(#b0aca4 0 1px,transparent 1px 2px);"></div>
<div style="left:202px;top:981px;width:16px;height:15px;background:#000000;"></div>
<div style="left:225px;top:981px;width:16px;height:15px;background:#0000ff;"></div>
<div style="left:248px;top:981px;width:16px;height:15px;background:#ff0000;"></div>
<div style="left:271px;top:981px;width:16px;height:15px;background:#00ff00;"></div>
<div style="left:294px;top:981px;width:16px;height:15px;background:#ff99cc;"></div>
<div style="left:317px;top:981px;width:16px;height:15px;background:#ffff00;"></div>
<div style="left:340px;top:981px;width:16px;height:15px;background:#00ffff;"></div>
<div style="left:363px;top:981px;width:16px;height:15px;background:#996633;"></div>
<div style="left:386px;top:981px;width:16px;height:15px;background:#008000;"></div>
<div style="left:409px;top:981px;width:16px;height:15px;background:#9999cc;"></div>
<div style="left:432px;top:981px;width:16px;height:15px;background:#800080;"></div>
<div style="left:455px;top:981px;width:16px;height:15px;background:#0099cc;"></div>
<div style="left:478px;top:981px;width:16px;height:15px;background:#ff9900;"></div>
<div style="left:501px;top:981px;width:16px;height:15px;background:#99ccff;"></div>
<div style="left:524px;top:981px;width:16px;height:15px;background:#808080;"></div>
<div style="left:547px;top:981px;width:16px;height:15px;background:#000080;"></div>
<div style="left:570px;top:981px;width:16px;height:15px;background:#808000;"></div>
<div style="left:593px;top:981px;width:16px;height:15px;background:#ff0099;"></div>
<div style="left:616px;top:981px;width:16px;height:15px;background:#008080;"></div>
<div style="left:639px;top:981px;width:16px;height:15px;background:#99ff00;"></div>
<svg style="left:666px;top:995px" width="6" height="4"><path d="M0 0H6L3 3Z" fill="#6a6a6a"/></svg>
<div style="left:0px;top:975px;width:675px;height:27px;border:1px solid #d2cfc8;border-left:none;border-top:none;"></div>
<div class="t" style="left:3px;top:1006px;">Parallel Offset</div>
<div style="left:930px;top:1004px;width:146px;height:16px;box-shadow:inset 1px 1px #808080,inset -1px -1px #fff;"></div>
<div class="t" style="left:932px;top:1007px;">X=178.15;Y=531.10</div>
<div style="left:1078px;top:1004px;width:136px;height:16px;box-shadow:inset 1px 1px #808080,inset -1px -1px #fff;"></div>
<div class="t" style="left:1080px;top:1007px;">Worked Times:00:00:00</div>
<div style="left:1216px;top:1004px;width:205px;height:16px;box-shadow:inset 1px 1px #808080,inset -1px -1px #fff;"></div>
<div class="t" style="left:1218px;top:1007px;">Laser Pos:X=0.00;Y=0.00</div>
<div style="left:1424px;top:1004px;width:256px;height:16px;box-shadow:inset 1px 1px #808080,inset -1px -1px #fff;"></div>
<div class="t" style="left:1426px;top:1007px;">Lightobject.com</div>
<div style="left:0px;top:1021px;width:1680px;height:1px;background:#fff;"></div>
<div style="left:0px;top:1022px;width:1680px;height:28px;background:#dbd8d1;"></div>
<div style="left:2px;top:1024px;width:52px;height:22px;box-shadow:inset -1px -1px #404040,inset 1px 1px #fff,inset -2px -2px #808080,inset 2px 2px #dbd8d1;background:#dbd8d1;"></div>
<svg style="left:4px;top:1026px;" width="16" height="16" viewBox="0 0 16 16"><g transform="skewY(-8) translate(0 2)"><path d="M2 2Q5 0 7.5 2V7Q5 5.5 2 7Z" fill="#e8702a"/><path d="M8.5 2.5Q11 4 15 2.5V7.5Q11 9 8.5 7.5Z" fill="#7cc830"/><path d="M1.5 8Q4.5 6.5 7.5 8V13Q4.5 11.5 1.5 13Z" fill="#4a78d8"/><path d="M8.5 8.5Q11 10 14.5 8.5V13.5Q11 15 8.5 13.5Z" fill="#f0c818"/></g></svg>
<div class="t" style="left:22px;top:1029px;font-weight:bold;font-size:12px;">Start</div>
<div style="left:61px;top:1026px;width:1px;height:20px;background:#808080;"></div>
<div style="left:62px;top:1026px;width:1px;height:20px;background:#fff;"></div>
<div style="left:68px;top:1024px;width:160px;height:22px;box-shadow:inset -1px -1px #404040,inset 1px 1px #fff,inset -2px -2px #808080,inset 2px 2px #dbd8d1;background:#dbd8d1;"></div>
<svg style="left:73px;top:1027px;" width="16" height="16" viewBox="0 0 16 16"><circle cx="8" cy="8" r="7.3" fill="#ffd820" stroke="#b06a00" stroke-width="1.1"/><ellipse cx="5.5" cy="5.5" rx="1" ry="1.5" fill="#000"/><ellipse cx="10.5" cy="5.5" rx="1" ry="1.5" fill="#000"/><path d="M3 8.5Q8 9.5 13 8.5Q12.5 13.5 8 13.5Q3.5 13.5 3 8.5Z" fill="#b01010" stroke="#000" stroke-width=".8"/><path d="M4 9H12V10H4Z" fill="#fff"/></svg>
<div class="t" style="left:92px;top:1029px;transform:scaleX(.955);transform-origin:0 0;">Yahoo! Messenger</div>
<div style="left:231px;top:1024px;width:160px;height:22px;box-shadow:inset -1px -1px #404040,inset 1px 1px #fff,inset -2px -2px #808080,inset 2px 2px #dbd8d1;background:#dbd8d1;"></div>
<svg style="left:236px;top:1027px;" width="16" height="16" viewBox="0 0 16 16"><rect x=".5" y=".5" width="15" height="15" fill="#fde6b0" stroke="#e0a040"/><circle cx="8" cy="8" r="5.5" fill="#fff4d8" stroke="#d08020" stroke-width="1.2"/><path d="M8 4.5V8H11" fill="none" stroke="#d08020" stroke-width="1.2"/></svg>
<div class="t" style="left:255px;top:1029px;transform:scaleX(.955);transform-origin:0 0;">Sales - Microsoft Outlook</div>
<div style="left:394px;top:1024px;width:160px;height:22px;box-shadow:inset -1px -1px #404040,inset 1px 1px #fff,inset -2px -2px #808080,inset 2px 2px #dbd8d1;background:#dbd8d1;"></div>
<svg style="left:399px;top:1027px;" width="16" height="16" viewBox="0 0 16 16"><path d="M2.5 9.5A5.5 5.5 0 1 1 13.5 10H5.5A2.6 2.6 0 0 0 10.5 11.5H13A5.6 5.6 0 0 1 2.5 9.5ZM5.5 7.5H10.5A2.5 2.5 0 0 0 5.5 7.5Z" fill="#2a78d0"/><path d="M1 14Q-1 11 5 5Q12 -1 15 1Q16 3 12 6" fill="none" stroke="#f0b020" stroke-width="1.2"/></svg>
<div class="t" style="left:418px;top:1029px;transform:scaleX(.955);transform-origin:0 0;">Lightobject.com Forum &amp;...</div>
<div style="left:557px;top:1024px;width:159px;height:22px;box-shadow:inset 1px 1px #808080,inset -1px -1px #fff,inset 2px 2px #404040,inset -2px -2px #dbd8d1;background-color:#fff;"><div class="chk" style="left:2px;top:2px;width:155px;height:18px"></div></div>
<svg style="left:563px;top:1028px;" width="16" height="16" viewBox="0 0 16 16"><rect x="0" y="0" width="16" height="16" fill="#fff"/><path d="M0 6H16L8 14Z" fill="#1a2430"/><circle cx="8" cy="5" r="2.4" fill="#e02020"/></svg>
<div class="t" style="left:581px;top:1030px;font-weight:bold;">LaserCAD V5.85 - Unti...</div>
<div style="left:1411px;top:1026px;width:1px;height:20px;background:#fff;"></div>
<div style="left:1412px;top:1026px;width:1px;height:20px;background:#808080;"></div>
<div style="left:1422px;top:1028px;width:16px;height:16px;background:#0a246a;"><div class="t" style="left:0;top:1px;width:16px;text-align:center;color:#fff;font-size:11px;letter-spacing:-.5px">EN</div></div>
<div style="left:1443px;top:1026px;width:1px;height:20px;background:#808080;"></div>
<div style="left:1444px;top:1026px;width:1px;height:20px;background:#fff;"></div>
<svg style="left:1451px;top:1028px;" width="15" height="17" viewBox="0 0 15 17"><path d="M1.5 1.5H13.5V12.5H9L7 15.5V12.5H1.5Z" fill="#fff" stroke="#000" stroke-width="1.2"/><text x="4.2" y="11" font-family="Liberation Sans" font-weight="bold" font-size="11" fill="#000">?</text></svg>
<div style="left:1470px;top:1026px;width:1px;height:20px;background:#808080;"></div>
<div style="left:1471px;top:1026px;width:1px;height:20px;background:#fff;"></div>
<svg style="left:1477px;top:1027px" width="10" height="15"><rect x="3.5" y=".5" width="6" height="4" fill="none" stroke="#000"/><rect x=".5" y="2.5" width="6" height="4" fill="#dbd8d1" stroke="#000"/><path d="M2 11H8L5 14Z" fill="#000"/></svg>
<div style="left:1493px;top:1024px;width:187px;height:23px;box-shadow:inset 1px 1px #808080,inset -1px -1px #fff;"></div>
<svg style="left:1498px;top:1032px" width="9" height="8"><path d="M4 .5L1 4L4 7.5M8 .5L5 4L8 7.5" fill="none" stroke="#000" stroke-width="1.6"/></svg>
<svg style="left:1511px;top:1027px;" width="17" height="15" viewBox="0 0 17 15"><rect x="4.5" y="5.5" width="12" height="9" fill="#f8e8a8" stroke="#c09030"/><path d="M4.5 5.5L10.5 10.5L16.5 5.5" fill="none" stroke="#c09030"/><path d="M4 0V8M0 4H8M1 1L7 7M7 1L1 7" stroke="#f09018" stroke-width="1.2"/></svg>
<svg style="left:1547px;top:1028px;" width="16" height="16" viewBox="0 0 16 16"><rect x=".5" y=".5" width="15" height="15" fill="#fde6b0" stroke="#e0a040"/><circle cx="8" cy="8" r="5.5" fill="#fff4d8" stroke="#d08020" stroke-width="1.2"/><path d="M8 4.5V8H11" fill="none" stroke="#d08020" stroke-width="1.2"/></svg>
<svg style="left:1565px;top:1028px;" width="16" height="16" viewBox="0 0 16 16"><circle cx="8" cy="8" r="7.3" fill="#ffd820" stroke="#b06a00" stroke-width="1.1"/><ellipse cx="5.5" cy="5.5" rx="1" ry="1.5" fill="#000"/><ellipse cx="10.5" cy="5.5" rx="1" ry="1.5" fill="#000"/><path d="M3 8.5Q8 9.5 13 8.5Q12.5 13.5 8 13.5Q3.5 13.5 3 8.5Z" fill="#b01010" stroke="#000" stroke-width=".8"/><path d="M4 9H12V10H4Z" fill="#fff"/></svg>
<svg style="left:1583px;top:1028px;" width="16" height="14" viewBox="0 0 16 14"><rect x="0" y="2" width="7" height="7" fill="#2a3080"/><rect x="1" y="3" width="5" height="4" fill="#4a58b0"/><path d="M0 12L2 10H7L6 12Z" fill="#4a58a8"/><rect x="0" y="12" width="6" height="2" fill="#8890c8"/><path d="M8 4Q9 5 8 6M10 2Q12 5 10 8M12 0Q15 5 12 10" fill="none" stroke="#505878" stroke-width=".9"/></svg>
<svg style="left:1603px;top:1028px;" width="13" height="16" viewBox="0 0 13 16"><path d="M.8 1.5Q6.5 .5 12.2 1.5V8Q12.2 13 6.5 15.5Q.8 13 .8 8Z" fill="#2a5ab8" stroke="#1a3a80"/><path d="M2.5 3Q6.5 2.3 10.5 3V8Q10.5 12 6.5 13.8Q2.5 12 2.5 8Z" fill="#fff"/><path d="M3.8 4L6.5 11.5L9.2 4" fill="none" stroke="#d01818" stroke-width="2"/></svg>
<div class="t" style="left:1626px;top:1030px;">5:30 PM</div>
<div style="left:118px;top:40px;width:189px;height:453px;background:#f9f8f7;border:1px solid #666;box-shadow:4px 4px 1.5px rgba(0,0,0,.24);"></div>
<div style="left:119px;top:41px;width:23px;height:451px;background:#dbd8d1;"></div>
<div style="left:118px;top:40px;width:34px;height:1px;background:#dbd8d1;border-left:1px solid #808080;"></div>
<div style="left:153px;top:23px;width:4px;height:17px;background:linear-gradient(to right,rgba(0,0,0,.22),rgba(0,0,0,0));"></div>
<div class="t" style="left:149px;top:47px;color:#000;transform:scaleX(.955);transform-origin:0 0;"><u>A</u>rray Clone...</div>
<svg style="left:123px;top:44px;" width="16" height="16" viewBox="0 0 16 16"><g fill="#fff" stroke="#000" stroke-width="1.4"><rect x=".7" y=".7" width="5.6" height="5.6"/><rect x="9.7" y=".7" width="5.6" height="5.6"/><rect x=".7" y="9.7" width="5.6" height="5.6"/><rect x="9.7" y="9.7" width="5.6" height="5.6"/></g></svg>
<div class="t" style="left:149px;top:70px;color:#000;transform:scaleX(.955);transform-origin:0 0;">Move To Origin</div>
<svg style="left:123px;top:67px;" width="16" height="16" viewBox="0 0 16 16"><path d="M0 2.5H14" stroke="#0a0aa0" stroke-width="1.2"/><path d="M2.5 0V15" stroke="#0a0aa0" stroke-width="1.2"/><path d="M4 4L8 8" stroke="#d020d0"/><path d="M3.5 3.5L6.5 4L4 6.5Z" fill="#d020d0"/><rect x="8.5" y="8.5" width="6" height="6" fill="#fff" stroke="#000" stroke-width="1.3"/></svg>
<div class="t" style="left:149px;top:93px;color:#000;transform:scaleX(.955);transform-origin:0 0;">Select By Color</div>
<svg style="left:123px;top:89px;" width="17" height="18" viewBox="0 0 17 18"><path d="M4 1H16L12 5H0Z" fill="#a0e8a0" stroke="#000" stroke-width="1.1"/><path d="M4 5H16L12 9H0Z" fill="#f0f0a0" stroke="#000" stroke-width="1.1"/><path d="M4 9H16L12 13H0Z" fill="#80e0e8" stroke="#000" stroke-width="1.1"/><path d="M9 9V18" stroke="#000" stroke-width="1.3"/><path d="M6.5 11.5L9 8L12 11" fill="#000"/><rect x="10" y="12" width="4" height="5" fill="#fff"/></svg>
<div style="left:145px;top:110px;width:161px;height:1px;background:#c5c2b8;"></div>
<div class="t" style="left:149px;top:118px;color:#000;transform:scaleX(.955);transform-origin:0 0;">Mirror Horizontally</div>
<svg style="left:123px;top:115px;" width="16" height="17" viewBox="0 0 16 17"><path d="M6.5 .5V11.5H.5Z" fill="#fff" stroke="#000" stroke-width="1.2"/><path d="M9.5 .5V11.5H15.5Z" fill="#e8e8ff" stroke="#0a0a80" stroke-width="1.2"/><path d="M8 0V12" stroke="#0a0a80" stroke-width="1.2"/><path d="M1 15H13" stroke="#000" stroke-width="1.3"/><path d="M11 12.5L15 15L11 17.5Z" fill="#000"/></svg>
<div class="t" style="left:149px;top:141px;color:#000;transform:scaleX(.955);transform-origin:0 0;">Mirror Vertically</div>
<svg style="left:123px;top:138px;" width="17" height="16" viewBox="0 0 17 16"><path d="M.5 6.5H11.5L11.5 .5Z" fill="#fff" stroke="#000" stroke-width="1.2"/><path d="M.5 9.5H11.5V15.5Z" fill="#e8e8ff" stroke="#0a0a80" stroke-width="1.2"/><path d="M0 8H12" stroke="#000" stroke-width="1.2"/><path d="M15 16V3" stroke="#0a0a80" stroke-width="1.3"/><path d="M12.5 5L15 1L17.5 5Z" fill="#0a0a80"/></svg>
<div style="left:145px;top:158px;width:161px;height:1px;background:#c5c2b8;"></div>
<div class="t" style="left:149px;top:166px;color:#000;transform:scaleX(.955);transform-origin:0 0;">Manual Order</div>
<svg style="left:123px;top:163px;" width="17" height="17" viewBox="0 0 17 17"><path d="M6 6L9 2L15 1V5L10 6Z" fill="#e8e870" stroke="#000" stroke-width="1"/><path d="M6 6L9 9" stroke="#000" stroke-dasharray="1 1"/><text x="1" y="15" font-family="Liberation Serif" font-size="10" fill="#e03030" letter-spacing="-1.5">1</text><text x="5" y="15" font-family="Liberation Serif" font-size="10" fill="#2030c0">2</text><text x="9" y="15" font-family="Liberation Serif" font-size="10" fill="#90a040">3</text></svg>
<div class="t" style="left:149px;top:189px;color:#000;transform:scaleX(.955);transform-origin:0 0;">Automatic Order</div>
<svg style="left:123px;top:186px;" width="17" height="17" viewBox="0 0 17 17"><path d="M7 6Q10 1 15 4" fill="none" stroke="#000" stroke-width="1.1"/><path d="M5.5 5L9 4.5L7.5 8Z" fill="#000"/><text x="1" y="15" font-family="Liberation Serif" font-size="10" fill="#e03030" letter-spacing="-1.5">1</text><text x="5" y="15" font-family="Liberation Serif" font-size="10" fill="#2030c0">2</text><text x="9" y="15" font-family="Liberation Serif" font-size="10" fill="#90a040">3</text></svg>
<div style="left:145px;top:206px;width:161px;height:1px;background:#c5c2b8;"></div>
<div class="t" style="left:149px;top:214px;color:#000;transform:scaleX(.955);transform-origin:0 0;"><u>S</u>mooth Object(s)</div>
<svg style="left:123px;top:211px;" width="17" height="17" viewBox="0 0 17 17"><path d="M4 0L1 4L4 8L1 12L4 16" fill="none" stroke="#000" stroke-width="1.1"/><path d="M14 0L12 4L15 8L12 12L15 16" fill="none" stroke="#000" stroke-width="1.1"/><path d="M4 6.5H7V4.5L10 8.0L7 11.5V9.5H4Z" fill="#fff" stroke="#1020c0" stroke-width="1.6"/></svg>
<div class="t" style="left:149px;top:237px;color:#000;transform:scaleX(.955);transform-origin:0 0;"><u>D</u>elete Repeated Lines</div>
<svg style="left:123px;top:234px;" width="17" height="17" viewBox="0 0 17 17"><path d="M1.5 0V16" stroke="#c03030" stroke-width="1.1"/><path d="M1.5 0V16" stroke="#000" stroke-width="1.1" stroke-dasharray="0 8 8"/><path d="M14.5 0V16" stroke="#000" stroke-width="1.3"/><path d="M4 3L6 5M6 3L4 5" stroke="#2030c0"/><path d="M5 7.5H8V5.5L11 9.0L8 12.5V10.5H5Z" fill="#fff" stroke="#1020c0" stroke-width="1.6"/></svg>
<div class="t" style="left:149px;top:260px;color:#000;transform:scaleX(.955);transform-origin:0 0;"><u>U</u>nite Lines</div>
<svg style="left:123px;top:257px;" width="17" height="17" viewBox="0 0 17 17"><path d="M2 0V16M14.5 0V16" stroke="#000" stroke-width="1.2"/><circle cx="2" cy="5" r="1.3" fill="#fff" stroke="#000"/><circle cx="2" cy="11" r="1.3" fill="#fff" stroke="#000"/><circle cx="14.5" cy="8" r="1.3" fill="#fff" stroke="#000"/><path d="M5 6.5H8V4.5L11 8.0L8 11.5V9.5H5Z" fill="#fff" stroke="#1020c0" stroke-width="1.6"/></svg>
<div style="left:145px;top:277px;width:161px;height:1px;background:#c5c2b8;"></div>
<div class="t" style="left:149px;top:285px;color:#000;transform:scaleX(.955);transform-origin:0 0;"><u>E</u>dit Cutting Guide_Line</div>
<svg style="left:123px;top:283px;" width="17" height="15" viewBox="0 0 17 15"><path d="M1.5 3V12" stroke="#6cd4e4" stroke-width="1.5"/><path d="M3 2H6" stroke="#e8e880"/><rect x=".5" y=".5" width="2" height="2" fill="#fff" stroke="#000"/><rect x=".5" y="10.5" width="2" height="2" fill="#fff" stroke="#000"/><path d="M2.5 10.5L5 6" stroke="#000"/><circle cx="9.5" cy="6" r="5" fill="none" stroke="#000" stroke-width="1.2"/></svg>
<div class="t" style="left:149px;top:308px;color:#000;transform:scaleX(.955);transform-origin:0 0;">Auto Cutting Guide_L<u>i</u>ne</div>
<svg style="left:123px;top:306px;" width="17" height="15" viewBox="0 0 17 15"><rect x=".5" y=".5" width="2" height="2" fill="#fff" stroke="#000"/><path d="M3 1H8L10 3" stroke="#e8e880" fill="none" stroke-width="1.2"/><circle cx="11" cy="6.5" r="5" fill="none" stroke="#000" stroke-width="1.1" stroke-dasharray="2.4 1.2"/><rect x="9.5" y="5" width="3" height="3" fill="#fff" stroke="#000" stroke-width=".9"/></svg>
<div style="left:145px;top:325px;width:161px;height:1px;background:#c5c2b8;"></div>
<div class="t" style="left:149px;top:333px;color:#a0a0a0;transform:scaleX(.955);transform-origin:0 0;">Image Invert</div>
<svg style="left:124px;top:331px;" width="15" height="15" viewBox="0 0 15 15"><rect x="0" y="0" width="15" height="15" fill="#a8a6a0"/><path d="M1 1H7.5L5.5 3L10 7.5L7.5 10L3 5.5L1 7.5Z" fill="#e6e4de"/><path d="M10 6.5L14 2.5V6L11.5 8.5Z" fill="#e6e4de"/><path d="M6 14.5L10 10.5L12 12.5L9.5 15H6Z" fill="#e6e4de"/></svg>
<div class="t" style="left:149px;top:356px;color:#a0a0a0;transform:scaleX(.955);transform-origin:0 0;">Image Dither</div>
<svg style="left:124px;top:354px;" width="14" height="14" viewBox="0 0 14 14"><path d="M0 0h2v2h-2zM4 0h2v2h-2zM8 0h2v2h-2zM12 0h2v2h-2zM2 2h2v2h-2zM6 2h2v2h-2zM10 2h2v2h-2zM0 4h2v2h-2zM4 4h2v2h-2zM8 4h2v2h-2zM12 4h2v2h-2zM2 6h2v2h-2zM6 6h2v2h-2zM10 6h2v2h-2zM0 8h2v2h-2zM4 8h2v2h-2zM8 8h2v2h-2zM12 8h2v2h-2zM2 10h2v2h-2zM6 10h2v2h-2zM10 10h2v2h-2zM0 12h2v2h-2zM4 12h2v2h-2zM8 12h2v2h-2zM12 12h2v2h-2z" fill="#a8a6a0"/></svg>
<div class="t" style="left:149px;top:379px;color:#a0a0a0;transform:scaleX(.955);transform-origin:0 0;">Create Image <u>B</u>lock</div>
<svg style="left:123px;top:376px;" width="16" height="16" viewBox="0 0 16 16"><rect x="1.5" y="1.5" width="13" height="12" fill="none" stroke="#a8a6a0" stroke-width="1.2" stroke-dasharray="1.5 1.5"/></svg>
<div class="t" style="left:149px;top:402px;color:#a0a0a0;transform:scaleX(.955);transform-origin:0 0;">Create Image Outli<u>n</u>e</div>
<svg style="left:123px;top:399px;" width="16" height="16" viewBox="0 0 16 16"><path d="M1.5 .5H6.5V5.5Q8 4.5 10 4.5Q14.5 4.5 14.5 9.5Q14.5 15 9.5 15.5H3.5L1.5 15.5V14.5H2.5V1.5H1.5Z" fill="#ecebe6" stroke="#a8a6a0" stroke-width="1.1"/><path d="M6.5 8Q7.5 7 9 7Q11 7 11 10Q11 13 9 13Q7.5 13 6.5 12Z" fill="#dbd8d1" stroke="#a8a6a0" stroke-width="1"/></svg>
<div style="left:145px;top:419px;width:161px;height:1px;background:#c5c2b8;"></div>
<div style="left:119px;top:421px;width:187px;height:22px;background:#b6bdd2;border:1px solid #0a246a;"></div>
<div class="t" style="left:149px;top:427px;color:#000;transform:scaleX(.955);transform-origin:0 0;"><u>P</u>arallel Offset...</div>
<svg style="left:121px;top:424px;" width="21" height="16" viewBox="0 0 21 16"><path d="M7 .6H12L13.4 2V5.6H17L18.4 7.6V12L17 13.4H2L.6 12V7.6L2 5.6H5.6V2Z" transform="translate(1 1)" fill="none" stroke="#8a8e9e" stroke-width="1"/><path d="M7 .6H12L13.4 2V5.6H17L18.4 7.6V12L17 13.4H2L.6 12V7.6L2 5.6H5.6V2Z" fill="#f8d4d4" stroke="#000" stroke-width="1.2"/><path d="M8.2 2.6H10.8L11.4 3.2V7.6H15.8L16.4 8.2V10.8L15.8 11.4H3.2L2.6 10.8V8.2L3.2 7.6H7.6V3.2Z" fill="#fcd8dc" stroke="#5a0808" stroke-width="1.1"/></svg>
<div style="left:145px;top:444px;width:161px;height:1px;background:#c5c2b8;"></div>
<div class="t" style="left:149px;top:452px;color:#000;transform:scaleX(.955);transform-origin:0 0;">Estimate <u>W</u>ork Time</div>
<svg style="left:123px;top:449px;" width="17" height="17" viewBox="0 0 17 17"><path d="M5.5 .8H10.5L15.2 5.5V10.5L10.5 15.2H5.5L.8 10.5V5.5Z" fill="#fff" stroke="#0a1a80" stroke-width="1.2"/><path d="M8 .5V3.5M8 12.5V15.5M.5 8H3.5M12.5 8H15.5" stroke="#0a1a80" stroke-width="2"/><path d="M11 5L8 8L11 11" fill="none" stroke="#0a1a80" stroke-width="1.1"/><rect x="7.2" y="7.2" width="1.6" height="1.6" fill="#0a1a80"/></svg>
<div class="t" style="left:149px;top:475px;color:#000;transform:scaleX(.955);transform-origin:0 0;"><u>S</u>imulate</div>
<svg style="left:123px;top:472px;" width="17" height="17" viewBox="0 0 17 17"><rect x="1" y="1" width="14.5" height="11" fill="#f4f4ff" stroke="#1020b0" stroke-width="1.5"/><path d="M2 8L5 5L8 8L11 5L14 8" fill="none" stroke="#0a1a80" stroke-width="1" stroke-linejoin="miter"/><rect x="7" y="12" width="3" height="2" fill="#1020b0"/><rect x="4" y="14" width="9" height="2" fill="#1020b0"/></svg>
</div></body></html>
